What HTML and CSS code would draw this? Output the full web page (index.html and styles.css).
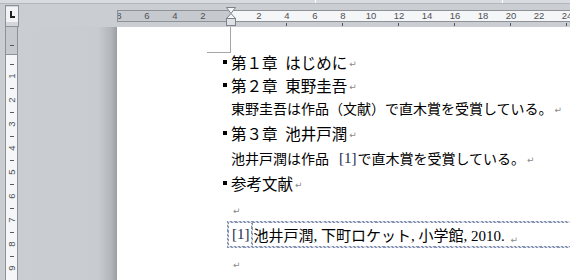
FILE: index.html
```html
<!DOCTYPE html>
<html lang="ja">
<head>
  <meta charset="UTF-8">
  <title>文書 - 参考文献</title>
  <link rel="stylesheet" href="styles.css">
</head>
<body>

  <div class="window">
    <!-- top strip -->
    <div class="strip"><span class="strip-mark m1"></span><span class="strip-mark m2"></span></div>

    <!-- corner tab selector -->
    <div class="corner">
      <div class="tab-box"><div class="tab-inner"><span class="tab-l"></span></div></div>
    </div>

    <!-- horizontal ruler -->
    <div class="hruler">
      <div class="hr-bar">
        <div class="hr-nums">
          <span>8</span><span>6</span><span>4</span><span>2</span><span></span>
          <span>2</span><span>4</span><span>6</span><span>8</span><span>10</span><span>12</span>
          <span>14</span><span>16</span><span>18</span><span>20</span><span>22</span><span>24</span>
        </div>
      </div>
      <div class="hr-tabs"></div>
      <svg class="indent-marker" width="10" height="20" viewBox="0 0 10 20">
        <polygon points="0.5,0.5 9.5,0.5 5,6.5" fill="#f4f5f6" stroke="#7d828a"/>
        <polygon points="5,6.5 9.5,11.5 0.5,11.5" fill="#f4f5f6" stroke="#7d828a"/>
        <rect x="0.5" y="11.5" width="9" height="7" fill="#dfe1e4" stroke="#7d828a"/>
      </svg>
    </div>

    <!-- vertical ruler + gutter -->
    <div class="side">
      <div class="vruler">
        <div class="vr-margin"><span class="vr-tick"></span></div>
        <div class="vr-body">
          <span class="vr-tick"></span><span class="vr-num">1</span>
          <span class="vr-tick"></span><span class="vr-num">2</span>
          <span class="vr-tick"></span><span class="vr-num">3</span>
          <span class="vr-tick"></span><span class="vr-num">4</span>
          <span class="vr-tick"></span><span class="vr-num">5</span>
          <span class="vr-tick"></span><span class="vr-num">6</span>
          <span class="vr-tick"></span><span class="vr-num">7</span>
          <span class="vr-tick"></span><span class="vr-num">8</span>
          <span class="vr-tick"></span><span class="vr-num">9</span>
        </div>
      </div>
      <div class="gutter"></div>
    </div>

    <!-- page -->
    <div class="page">
      <div class="crop"></div>

      <div class="row heading h1"><span class="bullet"></span>第１章&ensp;はじめに<span class="para">↵</span></div>
      <div class="row heading h2"><span class="bullet"></span>第２章&ensp;東野圭吾<span class="para">↵</span></div>
      <div class="row body b1">東野圭吾は作品（文献）で直木賞を受賞している。<span class="para">↵</span></div>
      <div class="row heading h3"><span class="bullet"></span>第３章&ensp;池井戸潤<span class="para">↵</span></div>
      <div class="row body b2">池井戸潤は作品<span class="cite latin">[1]</span>で直木賞を受賞している。<span class="para">↵</span></div>
      <div class="row heading h4"><span class="bullet"></span>参考文献<span class="para">↵</span></div>
      <div class="row body empty1"><span class="para">↵</span></div>
      <div class="ref-row">
        <div class="ref-box">
          <span class="ref-num latin">[1]</span>
          <span class="ref-text">池井戸潤<span class="latin">, </span>下町ロケット<span class="latin">, </span>小学館<span class="latin">, 2010. </span><span class="para">↵</span></span>
        </div>
      </div>
      <div class="row body empty2"><span class="para">↵</span></div>
    </div>
  </div>

</body>
</html>
```

FILE: styles.css
```css
body {
  margin: 0;
  background-color: #cacdd2;
  font-family: "Noto Sans CJK JP", sans-serif;
  color: #000;
  overflow: hidden;
}
.window {
  width: 570px;
  height: 280px;
  display: grid;
  grid-template-columns: 117px 1fr;
  grid-template-rows: 4px 23px 1fr;
  overflow: hidden;
}

/* top strip */
.strip {
  grid-column: 1 / 3;
  position: relative;
  background-color: #d8dbdf;
  border-bottom: 1px solid #b4b8be;
  box-sizing: border-box;
}
.strip-mark {
  position: absolute;
  top: 0;
  width: 1px;
  height: 3px;
  background-color: #ffffff;
}
.strip-mark.m1 { left: 315px; }
.strip-mark.m2 { left: 502px; }

/* corner */
.corner {
  padding: 1px 0 0 5px;
}
.tab-box {
  width: 14px;
  height: 22px;
  box-sizing: border-box;
  border: 1px solid #8e9298;
  background-color: #d3d6da;
  padding: 1px 0 0 0;
}
.tab-inner {
  width: 12px;
  height: 15px;
  background-color: #f2f3f4;
  display: flex;
  align-items: center;
  justify-content: center;
}
.tab-l {
  display: block;
  width: 3px;
  height: 5px;
  border-left: 2px solid #222;
  border-bottom: 2px solid #222;
  margin-left: 1px;
}

/* horizontal ruler */
.hruler {
  position: relative;
  padding-top: 6px;
}
.hr-bar {
  height: 12px;
  box-sizing: border-box;
  border-top: 1px solid #8e9298;
  border-bottom: 1px solid #8e9298;
  border-left: 1px solid #8e9298;
  background: linear-gradient(to right, #c6c9ce 0 112px, #f5f6f7 112px);
  overflow: hidden;
}
.hr-nums {
  display: flex;
  margin-left: -13px;
  font-family: "Liberation Sans", sans-serif;
  font-size: 9.5px;
  line-height: 10px;
  color: #4d5157;
}
.hr-nums span {
  flex: 0 0 28px;
  text-align: center;
}
.hr-tabs {
  height: 3px;
  margin: 1px 0 0 169px;
  background-image: linear-gradient(to right, #55595f 0 1px, transparent 1px);
  background-size: 56px 100%;
}
.indent-marker {
  position: absolute;
  left: 109px;
  top: 3px;
}

/* side */
.side {
  display: flex;
}
.vruler {
  margin-left: 5px;
  width: 13px;
  box-sizing: border-box;
  border-left: 1px solid #8e9298;
  border-right: 1px solid #8e9298;
  display: flex;
  flex-direction: column;
}
.vr-margin {
  height: 28px;
  background-color: #c6c9ce;
  border-bottom: 1px solid #8e9298;
  box-sizing: border-box;
  display: flex;
  flex-direction: column;
  align-items: center;
  padding-top: 12px;
}
.vr-body {
  flex: 1;
  background-color: #f5f6f7;
  display: flex;
  flex-direction: column;
  align-items: center;
  padding-top: 3px;
}
.vr-tick {
  display: block;
  width: 4px;
  height: 12px;
  background: linear-gradient(#55595f, #55595f) center / 4px 1px no-repeat;
}
.vr-num {
  display: block;
  height: 12px;
  width: 11px;
  font-family: "Liberation Sans", sans-serif;
  font-size: 9.5px;
  line-height: 12px;
  text-align: center;
  color: #4d5157;
  transform: rotate(-90deg);
}
.gutter {
  flex: 1;
  background: linear-gradient(to right, #cacdd2 0, #c8cbd0 80px, #b2b5ba 93px, #9a9da2 99px);
}

/* page */
.page {
  background-color: #fff;
  overflow: hidden;
  display: flex;
  flex-direction: column;
}
.crop {
  flex: 0 0 auto;
  width: 23px;
  height: 25px;
  margin: 0 0 -3px 90px;
  border-right: 1px solid #a6a6a6;
  border-bottom: 1px solid #a6a6a6;
}
.row {
  flex: 0 0 auto;
  display: flex;
  align-items: center;
  white-space: nowrap;
}
.heading {
  padding-left: 106px;
  font-size: 15.5px;
}
.body {
  padding-left: 114px;
  font-size: 14px;
}
.h1 { height: 23px; }
.h2 { height: 23px; }
.b1 { height: 23px; }
.h3 { height: 27px; }
.b2 { height: 24px; }
.h4 { height: 26px; }
.empty1 { height: 25px; }
.empty2 { height: 30px; }
.bullet {
  width: 4px;
  height: 4px;
  background-color: #000;
  margin-right: 4px;
}
.para {
  font-family: "DejaVu Sans", sans-serif;
  font-size: 9px;
  color: #8a8a8a;
  margin-left: 2px;
  position: relative;
  top: 2px;
}
.latin {
  font-family: "Liberation Serif", serif;
}
.cite {
  margin: 0 1px 0 10px;
  font-size: 15px;
  color: #1e2a55;
}

/* reference entry */
.ref-row {
  flex: 0 0 auto;
  padding-left: 110px;
}
.ref-box {
  height: 27px;
  box-sizing: border-box;
  width: 600px;
  display: flex;
  align-items: stretch;
  border: 2px solid;
  border-image: repeating-linear-gradient(45deg, #8593b0 0 1.5px, #dde2ea 1.5px 3px) 2;
  white-space: nowrap;
}
.ref-num {
  display: flex;
  align-items: center;
  padding: 0 1px 0 3px;
  font-size: 15px;
  color: #1e2a55;
  border-right: 2px solid;
  border-image: repeating-linear-gradient(45deg, #8593b0 0 1.5px, #dde2ea 1.5px 3px) 2;
}
.ref-text {
  display: block;
  padding-left: 1px;
  font-size: 15px;
  line-height: 23px;
}
.ref-text .latin {
  white-space: pre;
}
```
